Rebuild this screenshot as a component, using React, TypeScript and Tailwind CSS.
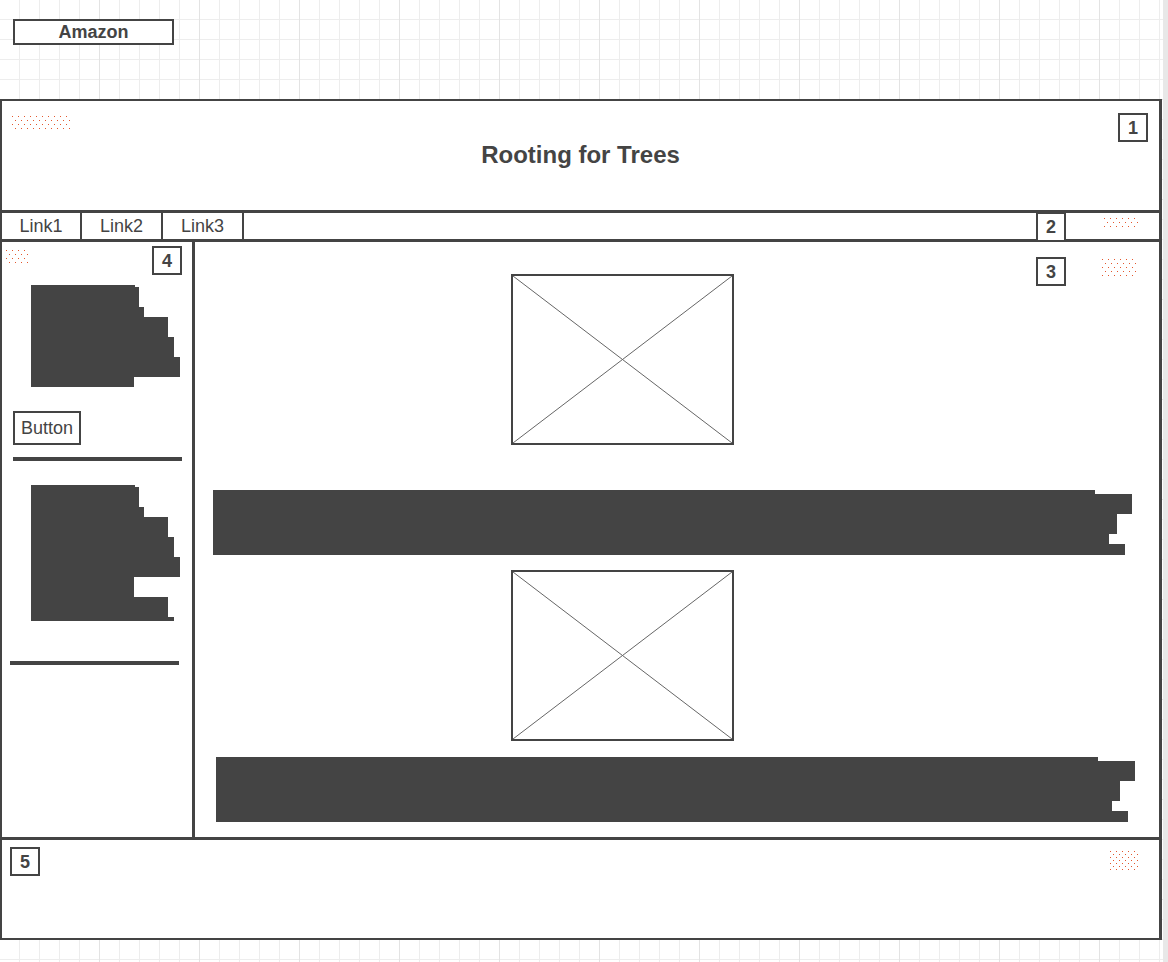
import React from "react";

type Row = [number, number];

const sideBlockA: Row[] = [
  [104, 2],
  [108, 20],
  [113, 10],
  [137, 20],
  [143, 20],
  [149, 20],
  [103, 10],
];

const sideBlockB: Row[] = [
  [104, 2],
  [108, 20],
  [113, 10],
  [137, 20],
  [143, 20],
  [149, 20],
  [103, 20],
  [137, 20],
  [143, 4],
];

const mainBlockA: Row[] = [
  [882, 4],
  [919, 20],
  [904, 20],
  [896, 10],
  [912, 11],
];

const mainBlockB: Row[] = [
  [882, 4],
  [919, 20],
  [904, 20],
  [896, 10],
  [912, 11],
];

const TextBlock = ({ rows }: { rows: Row[] }) => (
  <div className="flex flex-col">
    {rows.map(([w, h], i) => (
      <div key={i} className="bg-[#444]" style={{ width: w, height: h }} />
    ))}
  </div>
);

const Badge = ({ n, className }: { n: number; className: string }) => (
  <div
    className={
      "absolute flex h-[29px] w-[30px] items-center justify-center border-2 border-[#444] bg-white text-[18px] font-bold leading-none text-[#444] " +
      className
    }
  >
    {n}
  </div>
);

// balsamiq style annotation dots
const Dots = ({
  cols,
  rows,
  gap = 4,
  className,
}: {
  cols: number;
  rows: number;
  gap?: number;
  className: string;
}) => (
  <svg
    className={"pointer-events-none absolute " + className}
    width={cols * 6}
    height={rows * gap}
  >
    {Array.from({ length: rows }).map((_, r) =>
      Array.from({ length: cols }).map((_, c) => (
        <rect
          key={r + "-" + c}
          x={c * 6 + (r % 2) * 3}
          y={r * gap}
          width={1}
          height={1}
          fill="#e4572e"
        />
      ))
    )}
  </svg>
);

const ImagePlaceholder = () => (
  <div className="relative h-[171px] w-[223px] border-2 border-[#444] bg-white">
    <svg className="absolute inset-0 h-full w-full" preserveAspectRatio="none" viewBox="0 0 100 100">
      <line x1="0" y1="0" x2="100" y2="100" stroke="#666" strokeWidth="1" vectorEffect="non-scaling-stroke" />
      <line x1="100" y1="0" x2="0" y2="100" stroke="#666" strokeWidth="1" vectorEffect="non-scaling-stroke" />
    </svg>
  </div>
);

export default function App() {
  return (
    <div className="flex min-h-[962px] w-full font-['Liberation_Sans',Arial,sans-serif] text-[#444]">
      <div className="relative flex-1 bg-white bg-[linear-gradient(to_right,#e3e3e3_1px,transparent_1px),linear-gradient(to_bottom,#e3e3e3_1px,transparent_1px),linear-gradient(to_right,#ededed_1px,transparent_1px),linear-gradient(to_bottom,#ededed_1px,transparent_1px)] bg-[size:100px_100px,100px_100px,20px_20px,20px_20px] bg-[position:-1px_-1px]">
        <div className="ml-[13px] mt-[19px] flex h-[26px] w-[161px] items-center justify-center border-2 border-[#444] bg-white text-[18px] font-bold">
          Amazon
        </div>

        {/* wireframe */}
        <div className="relative mt-[54px] flex h-[841px] w-[1162px] flex-col border-2 border-r-[3px] border-[#444] bg-white">
          {/* header */}
          <div className="relative flex h-[112px] shrink-0 items-center justify-center border-b-[3px] border-[#444] pb-[2px]">
            <h1 className="text-[24px] font-bold">Rooting for Trees</h1>
            <Dots cols={10} rows={4} className="left-[10px] top-[15px]" />
            <Badge n={1} className="left-[1116px] top-[12px]" />
          </div>

          {/* nav */}
          <div className="relative flex h-[29px] shrink-0 border-b-[3px] border-[#444] text-[18px]">
            <div className="flex w-[80px] items-center justify-center border-r-2 border-[#444]">Link1</div>
            <div className="flex w-[81px] items-center justify-center border-r-2 border-[#444]">Link2</div>
            <div className="flex w-[81px] items-center justify-center border-r-2 border-[#444]">Link3</div>
            <Badge n={2} className="left-[1034px] top-[-1px] h-[30px]" />
            <Dots cols={6} rows={3} className="left-[1102px] top-[5px]" />
          </div>

          {/* body */}
          <div className="flex h-[598px] shrink-0 border-b-[3px] border-[#444]">
            <aside className="relative w-[193px] shrink-0 border-r-[3px] border-[#444] pl-[29px] pt-[43px]">
              <Dots cols={4} rows={4} className="left-[4px] top-[8px]" />
              <Badge n={4} className="left-[150px] top-[4px]" />
              <TextBlock rows={sideBlockA} />
              <button className="ml-[-18px] mt-[24px] flex h-[34px] w-[68px] items-center justify-center border-2 border-[#444] bg-white text-[18px]">
                Button
              </button>
              <div className="ml-[-18px] mt-[12px] h-[4px] w-[169px] bg-[#444]" />
              <div className="mt-[24px]">
                <TextBlock rows={sideBlockB} />
              </div>
              <div className="ml-[-21px] mt-[40px] h-[4px] w-[169px] bg-[#444]" />
            </aside>

            <main className="relative flex-1 pt-[32px]">
              <Badge n={3} className="left-[841px] top-[15px]" />
              <Dots cols={6} rows={5} className="left-[907px] top-[17px]" />
              <div className="ml-[316px]">
                <ImagePlaceholder />
              </div>
              <div className="ml-[18px] mt-[45px]">
                <TextBlock rows={mainBlockA} />
              </div>
              <div className="ml-[316px] mt-[15px]">
                <ImagePlaceholder />
              </div>
              <div className="ml-[21px] mt-[16px]">
                <TextBlock rows={mainBlockB} />
              </div>
            </main>
          </div>

          {/* footer */}
          <footer className="relative flex-1">
            <Badge n={5} className="left-[8px] top-[7px]" />
            <Dots cols={5} rows={7} gap={3} className="left-[1108px] top-[11px]" />
          </footer>
        </div>
      </div>
      <div className="w-[5px] shrink-0 bg-[#e8e8e8]" />
    </div>
  );
}
